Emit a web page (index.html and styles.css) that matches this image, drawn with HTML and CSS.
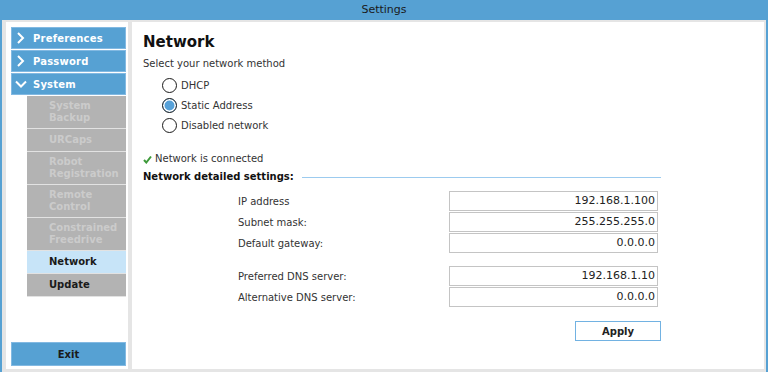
FILE: index.html
```html
<!DOCTYPE html>
<html lang="en">
<head>
    <meta charset="UTF-8">
    <meta name="viewport" content="width=device-width, initial-scale=1.0">
    <title>Settings</title>
    <link rel="stylesheet" href="styles.css">
</head>
<body>

<div class="window">
    <div class="titlebar">Settings</div>

    <div class="frame">
        <nav class="sidebar">
            <ul class="menu">
                <li class="menu-item">
                    <svg class="chevron" width="12" height="12" viewBox="0 0 12 12"><path d="M3 1 L8 6 L3 11" /></svg>
                    Preferences
                </li>
                <li class="menu-item">
                    <svg class="chevron" width="12" height="12" viewBox="0 0 12 12"><path d="M3 1 L8 6 L3 11" /></svg>
                    Password
                </li>
                <li class="menu-item">
                    <svg class="chevron" width="12" height="12" viewBox="0 0 12 12"><path d="M1 3.5 L6 8.5 L11 3.5" /></svg>
                    System
                </li>
            </ul>

            <ul class="submenu">
                <li class="sub-item disabled tall">System<br>Backup</li>
                <li class="sub-item disabled">URCaps</li>
                <li class="sub-item disabled tall">Robot<br>Registration</li>
                <li class="sub-item disabled tall">Remote<br>Control</li>
                <li class="sub-item disabled tall">Constrained<br>Freedrive</li>
                <li class="sub-item active">Network</li>
                <li class="sub-item">Update</li>
            </ul>

            <button class="exit">Exit</button>
        </nav>

        <main class="content">
            <h1>Network</h1>
            <p class="hint">Select your network method</p>

            <ul class="radios">
                <li><span class="radio"></span>DHCP</li>
                <li><span class="radio checked"></span>Static Address</li>
                <li><span class="radio"></span>Disabled network</li>
            </ul>

            <p class="status">
                <svg width="9" height="9" viewBox="0 0 9 9"><path d="M1 5 L3.3 7.5 L8 1.5" /></svg>
                Network is connected
            </p>

            <div class="details">
                <div class="details-head">
                    <span>Network detailed settings:</span>
                    <span class="rule"></span>
                </div>

                <div class="fields">
                    <label>IP address</label>
                    <div class="value">192.168.1.100</div>
                    <label>Subnet mask:</label>
                    <div class="value">255.255.255.0</div>
                    <label>Default gateway:</label>
                    <div class="value">0.0.0.0</div>
                    <div class="spacer"></div>
                    <label>Preferred DNS server:</label>
                    <div class="value">192.168.1.10</div>
                    <label>Alternative DNS server:</label>
                    <div class="value">0.0.0.0</div>
                </div>

                <div class="actions">
                    <button class="apply">Apply</button>
                </div>
            </div>
        </main>
    </div>
</div>

</body>
</html>
```

FILE: styles.css
```css
* {
    box-sizing: border-box;
}
body {
    margin: 0;
    font-family: 'DejaVu Sans', sans-serif;
    font-size: 10px;
    color: #333;
    background-color: #56a1d3;
}
ul {
    list-style: none;
    margin: 0;
    padding: 0;
}
.window {
    width: 768px;
    height: 372px;
    display: flex;
    flex-direction: column;
}
.titlebar {
    height: 20px;
    line-height: 20px;
    text-align: center;
    font-size: 11px;
    color: #1a1a1a;
}
.frame {
    flex: 1;
    display: flex;
    gap: 4px;
    margin: 0 2px;
    padding: 2px 2px 3px 4px;
    background-color: #e5e5e5;
}

/* sidebar */
.sidebar {
    width: 122px;
    background-color: #fff;
    padding: 5px 2px 3px 5px;
    display: flex;
    flex-direction: column;
}
.menu-item {
    height: 22px;
    margin-bottom: 1px;
    display: flex;
    align-items: center;
    gap: 6px;
    padding-left: 3px;
    background-color: #56a1d3;
    border: 1px solid #82b9e2;
    color: #fff;
    font-weight: bold;
    letter-spacing: 0.2px;
}
.chevron path {
    fill: none;
    stroke: #fff;
    stroke-width: 2;
}
.submenu {
    margin-left: 16px;
}
.sub-item {
    height: 23px;
    padding-left: 22px;
    display: flex;
    align-items: center;
    background-color: #b3b3b3;
    border-bottom: 1px solid #e2e2e2;
    color: #1a1a1a;
    font-weight: bold;
    line-height: 12px;
}
.sub-item.tall {
    height: 33px;
}
.sub-item.disabled {
    color: #cbcbcb;
}
.sub-item.active {
    background-color: #c7e4f8;
}
.exit {
    margin-top: auto;
    height: 24px;
    background-color: #56a1d3;
    border: 1px solid #82b9e2;
    font-family: inherit;
    font-size: 10px;
    font-weight: bold;
    color: #1a1a1a;
    padding: 0;
}

/* content */
.content {
    width: 632px;
    background-color: #fff;
    padding: 11px 0 0 11px;
}
h1 {
    margin: 0;
    font-size: 15px;
    line-height: 18px;
    color: #111;
}
.hint {
    margin: 6px 0 0;
    line-height: 14px;
}
.radios {
    margin-top: 4px;
    padding-left: 19px;
}
.radios li {
    height: 20px;
    display: flex;
    align-items: center;
    gap: 4px;
}
.radio {
    width: 15px;
    height: 15px;
    border: 1.5px solid #1a1a1a;
    border-radius: 50%;
    background-color: #fff;
}
.radio.checked {
    background-color: #56a1d9;
    box-shadow: inset 0 0 0 1.5px #fff;
}
.status {
    margin: 17px 0 0;
    line-height: 14px;
    display: flex;
    align-items: center;
    gap: 3px;
}
.status path {
    fill: none;
    stroke: #3e9a3a;
    stroke-width: 2;
}
.details {
    width: 518px;
    margin-top: 4px;
}
.details-head {
    display: flex;
    align-items: center;
    gap: 8px;
    line-height: 14px;
    font-weight: bold;
    color: #111;
}
.rule {
    flex: 1;
    height: 1px;
    background-color: #9ccbef;
}
.fields {
    margin: 7px 0 0 95px;
    display: grid;
    grid-template-columns: 211px 209px;
    grid-template-rows: 20px 20px 20px 11px 20px 20px;
    row-gap: 1px;
    align-items: center;
}
.fields .spacer {
    grid-column: 1 / 3;
}
.value {
    height: 20px;
    line-height: 18px;
    border: 1px solid #c4c4c4;
    text-align: right;
    padding-right: 2px;
    font-size: 11px;
    color: #222;
}
.actions {
    display: flex;
    justify-content: flex-end;
    margin-top: 14px;
}
.apply {
    width: 86px;
    height: 20px;
    padding: 0;
    background-color: #fff;
    border: 1px solid #72b2e2;
    font-family: inherit;
    font-size: 10px;
    font-weight: bold;
    color: #222;
}
```
